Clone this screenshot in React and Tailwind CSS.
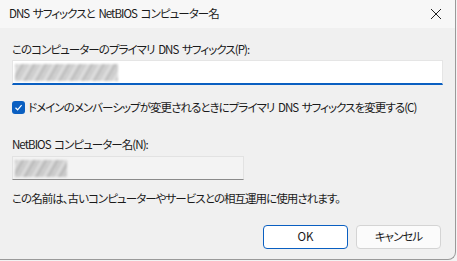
export default function App() {
  const font = {
    fontFamily: '"Noto Sans CJK JP", "Noto Sans", sans-serif',
    fontFeatureSettings: '"palt"',
  };
  return (
    <div className="w-[457px] h-[261px] bg-[#f3f3f3]" style={font}>
      <div className="w-[456px] h-[260px] flex flex-col bg-[#f0f0f0] border-r border-b border-[#9a9a9a] rounded-br-lg overflow-hidden text-[11.5px] tracking-[-0.95px] [word-spacing:2px] text-[#1a1a1a]">
        <div className="h-[28px] flex items-center justify-between pl-[9px] pr-[9px] bg-[#f7f7f7] shrink-0">
          <span className="leading-none whitespace-nowrap">DNS サフィックスと NetBIOS コンピューター名</span>
          <svg width="12" height="12" viewBox="0 0 12 12" className="mr-[4px]">
            <path d="M1 1 L11 11 M11 1 L1 11" stroke="#202020" strokeWidth="1" fill="none" />
          </svg>
        </div>
        <div className="flex flex-col px-[12px] pt-[13px]">
          <label className="leading-[16px] whitespace-nowrap">このコンピューターのプライマリ DNS サフィックス(P):</label>
          <div className="mt-[3px] h-[25px] w-[431px] bg-white border border-[#e5e5e5] border-b-[2px] border-b-[#0a5fc1] flex items-center px-[2px]">
            <div className="h-[17px] w-[103px] blur-[1.2px] bg-[repeating-linear-gradient(120deg,#c4c4c4_0px,#e4e4e4_4px,#b8b8b8_7px,#dcdcdc_10px)]" />
          </div>
          <div className="mt-[14px] flex items-center gap-[3px]">
            <div className="w-[13px] h-[13px] shrink-0 rounded-[3px] bg-[#0a5fc1] flex items-center justify-center">
              <svg width="9" height="9" viewBox="0 0 9 9">
                <path d="M1.5 4.8 L3.6 6.8 L7.6 2.2" stroke="white" strokeWidth="1.2" fill="none" />
              </svg>
            </div>
            <span className="leading-[16px] whitespace-nowrap">ドメインのメンバーシップが変更されるときにプライマリ DNS サフィックスを変更する(C)</span>
          </div>
          <label className="mt-[21px] leading-[16px] whitespace-nowrap">NetBIOS コンピューター名(N):</label>
          <div className="mt-[4px] h-[24px] w-[232px] bg-[#f3f3f3] border border-[#e2e2e2] border-b-[#8a8a8a] flex items-center px-[2px]">
            <div className="h-[17px] w-[52px] blur-[1.2px] bg-[repeating-linear-gradient(120deg,#c0c0c0_0px,#e2e2e2_4px,#b4b4b4_7px,#dadada_10px)]" />
          </div>
          <p className="mt-[10px] leading-[16px] whitespace-nowrap">この名前は、古いコンピューターやサービスとの相互運用に使用されます。</p>
          <div className="mt-[19px] flex justify-end gap-[8px] pr-[2px]">
            <button className="w-[85px] h-[24px] rounded-[4px] bg-white border border-[#0a5fc1] leading-none tracking-normal">OK</button>
            <button className="w-[85px] h-[24px] rounded-[4px] bg-[#fbfbfb] border border-[#d4d4d4] leading-none">キャンセル</button>
          </div>
        </div>
      </div>
    </div>
  );
}
